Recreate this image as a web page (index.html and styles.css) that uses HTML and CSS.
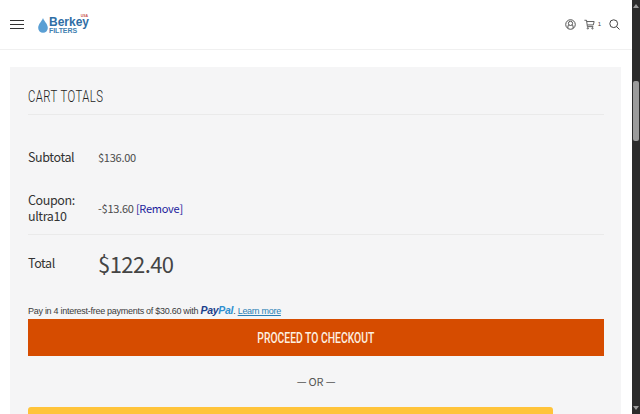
FILE: index.html
```html
<!DOCTYPE html>
<html lang="en">
<head>
<meta charset="utf-8">
<title>Cart totals</title>
<link rel="stylesheet" href="styles.css">
</head>
<body>
<div class="window">
  <main class="page">
    <header class="site-header">
      <div class="header-left">
        <button class="menu" aria-label="Menu"><span></span><span></span><span></span></button>
        <a class="logo">
          <svg class="drop" width="10" height="15" viewBox="0 0 10 15"><path d="M5 0C4 3 .2 6 .2 10a4.800 4.800 0 0 0 9.600 0C9.800 6 6 3 5 0z" fill="#5a9fd4"/></svg>
          <span class="logo-text"><span class="logo-name">Berkey</span><span class="logo-sub">FILTERS</span></span>
          <span class="logo-usa">USA</span>
        </a>
      </div>
      <div class="header-right">
        <svg width="11" height="11" viewBox="0 0 12 12" fill="none" stroke="#444" stroke-width="1"><circle cx="6" cy="6" r="5.200"/><circle cx="6" cy="4.800" r="2.300"/><path d="M3.800 6.500C3 8 3 9.500 3.500 10.300M8.200 6.500C9 8 9 9.500 8.500 10.300"/></svg>
        <span class="cart">
          <svg width="11" height="11" viewBox="0 0 13 12" fill="none" stroke="#444" stroke-width="1"><path d="M.5 1H3l1 7.500h7M3.300 2.500H12l-1 4H4"/><circle cx="4.500" cy="10.500" r=".8"/><circle cx="10" cy="10.500" r=".8"/></svg>
          <span class="cart-count">1</span>
        </span>
        <svg width="11" height="11" viewBox="0 0 11 11" fill="none" stroke="#444" stroke-width="1"><circle cx="4.700" cy="4.700" r="3.900"/><path d="M7.500 7.500l3 3"/></svg>
      </div>
    </header>
    <section class="card">
      <h2 class="card-title"><span class="card-title-text">CART TOTALS</span></h2>
      <div class="row row-subtotal">
        <div class="label">Subtotal</div>
        <div class="value">$136.00</div>
      </div>
      <div class="row row-coupon">
        <div class="label">Coupon:<br>ultra10</div>
        <div class="value">-$13.60 <a class="remove">[Remove]</a></div>
      </div>
      <div class="row row-total">
        <div class="label">Total</div>
        <div class="value value-total">$122.40</div>
      </div>
      <p class="paylater">Pay in 4 interest-free payments of $30.60 with <span class="pp"><span class="pp-a">Pay</span><span class="pp-b">Pal</span></span>. <a class="learn">Learn more</a></p>
      <a class="checkout"><span class="checkout-text">PROCEED TO CHECKOUT</span></a>
      <div class="or">— OR —</div>
      <div class="yellow"></div>
    </section>
  </main>
  <div class="scrollbar">
    <span class="arrow-up"></span>
    <span class="thumb"></span>
    <span class="arrow-down"></span>
  </div>
</div>
</body>
</html>
```

FILE: styles.css
```css
* { box-sizing: border-box; }
html, body { margin: 0; height: 100%; overflow: hidden; }
body { font-family: "Noto Sans CJK SC", "Noto Sans", sans-serif; color: #333; background: #fff; }
.window { display: flex; width: 640px; height: 414px; }
.page { width: 632px; height: 414px; overflow: hidden; background: #fff; }
.site-header { height: 50px; border-bottom: 1px solid #f0f0f0; display: flex; justify-content: space-between; align-items: center; padding: 0 12px 1px 10px; }
.header-left { display: flex; align-items: center; gap: 14px; }
.menu { display: flex; flex-direction: column; gap: 3px; width: 14px; padding: 0; border: 0; background: none; }
.menu span { display: block; height: 1px; width: 14px; background: #333; }
.logo { display: flex; align-items: flex-start; gap: 1px; position: relative; height: 14px; }
.drop { margin-top: 1px; }
.logo-text { display: flex; flex-direction: column; font-family: "Liberation Sans", sans-serif; font-weight: 700; }
.logo-name { font-size: 12px; line-height: 11px; color: #2f6ea5; }
.logo-sub { font-size: 7px; line-height: 6px; letter-spacing: -.1px; color: #3f7fb0; }
.logo-usa { position: absolute; right: 1px; top: -3px; font: 700 3.500px "Liberation Sans", sans-serif; color: #c9544f; }
.header-right { display: flex; align-items: center; gap: 8px; }
.cart { display: flex; align-items: center; gap: 3px; }
.cart-count { font: 6px "Liberation Sans", sans-serif; color: #444; }
.card { margin: 17px 11px 0 10px; height: 400px; background: #f5f5f6; padding: 0 17px 0 18px; }
.card-title { margin: 0; height: 48px; padding-top: 20px; border-bottom: 1px solid #eaeaea; font: 300 16px/20px Roboto, sans-serif; color: #222; }
.card-title-text { display: inline-block; transform: scaleX(.71); transform-origin: left center; letter-spacing: .6px; }
.row { display: flex; align-items: center; }
.row-subtotal { height: 84px; }
.row-coupon { height: 34px; margin-bottom: 9px; margin-top: -8px; }
.label { width: 70px; font-size: 12.500px; line-height: 16px; letter-spacing: -.4px; color: #333; }
.value { font-size: 11px; letter-spacing: -.25px; color: #4a4a4a; }
.remove { color: #1a1a9c; }
.row-total { height: 57px; border-top: 1px solid #eaeaea; }
.value-total { font-size: 22px; letter-spacing: -.55px; color: #444; }
.paylater { margin: 14px 0 0; font: 9px/11px "Liberation Sans", sans-serif; letter-spacing: -.28px; color: #3c3c3c; }
.pp { font-weight: 700; font-style: italic; font-size: 10.500px; }
.pp-a { color: #1b3f8b; }
.pp-b { color: #2d8fd0; }
.learn { color: #2a7fb5; text-decoration: underline; }
.checkout { display: flex; align-items: center; justify-content: center; height: 37px; margin-top: 2px; background: #d64c00; }
.checkout-text { display: inline-block; transform: scaleX(.69); font: 500 15px Roboto, sans-serif; color: #fdf0e0; white-space: nowrap; }
.or { margin-top: 16px; font-size: 11px; letter-spacing: -.2px; line-height: 18px; text-align: center; color: #555; }
.yellow { margin-top: 17px; width: 525px; height: 40px; background: #ffc43a; border-radius: 3px; }
.scrollbar { position: relative; width: 8px; height: 414px; background: #2b2b2b; }
.thumb { position: absolute; left: 1px; top: 81px; width: 6px; height: 60px; background: #9b9b9b; border-radius: 2px; }
.arrow-up, .arrow-down { position: absolute; left: 1px; width: 0; height: 0; border-left: 3px solid transparent; border-right: 3px solid transparent; }
.arrow-up { top: 4px; border-bottom: 4px solid #9b9b9b; }
.arrow-down { bottom: 4px; border-top: 4px solid #9b9b9b; }
```
